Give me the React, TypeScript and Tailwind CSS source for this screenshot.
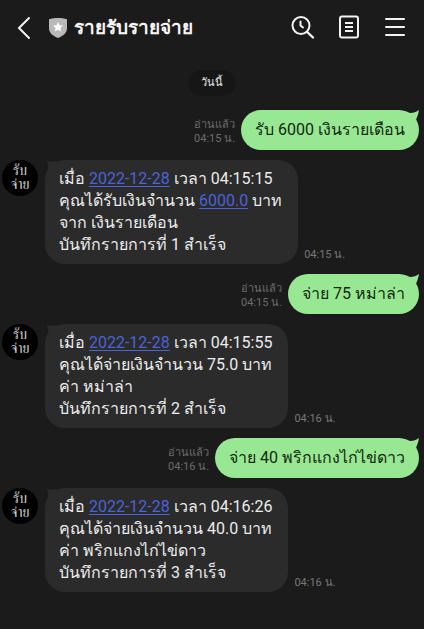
import React from "react";

type Incoming = {
  kind: "in";
  date: string;
  clock: string;
  lead: string;
  amount: string;
  linked?: boolean;
  item: string;
  entry: number;
  time: string;
};
type Outgoing = { kind: "out"; text: string; time: string };
type Message = Incoming | Outgoing;

const messages: Message[] = [
  { kind: "out", text: "รับ 6000 เงินรายเดือน", time: "04:15 น." },
  { kind: "in", date: "2022-12-28", clock: "04:15:15", lead: "คุณได้รับเงินจำนวน", amount: "6000.0", linked: true, item: "จาก เงินรายเดือน", entry: 1, time: "04:15 น." },
  { kind: "out", text: "จ่าย 75 หม่าล่า", time: "04:15 น." },
  { kind: "in", date: "2022-12-28", clock: "04:15:55", lead: "คุณได้จ่ายเงินจำนวน", amount: "75.0", item: "ค่า หม่าล่า", entry: 2, time: "04:16 น." },
  { kind: "out", text: "จ่าย 40 พริกแกงไก่ไข่ดาว", time: "04:16 น." },
  { kind: "in", date: "2022-12-28", clock: "04:16:26", lead: "คุณได้จ่ายเงินจำนวน", amount: "40.0", item: "ค่า พริกแกงไก่ไข่ดาว", entry: 3, time: "04:16 น." },
];

function Header() {
  return (
    <header className="flex h-14 items-center pr-4 pl-3">
      <button type="button" aria-label="Back" className="flex h-8 w-6 items-center justify-center">
        <svg width="14" height="24" viewBox="0 0 14 24" fill="none" stroke="#f4f4f4" strokeWidth="2" strokeLinecap="round">
          <path d="M12 2 L2 12 L12 22" />
        </svg>
      </button>
      <svg className="ml-3 shrink-0" width="20" height="22" viewBox="0 0 20 22" aria-hidden="true">
        <path d="M10 1 C13 1 16.500 1.300 19 2.200 V11 C19 16 15 19 10 21 C5 19 1 16 1 11 V2.200 C3.500 1.300 7 1 10 1Z" fill="#b9b9b9" />
        <path d="M10 5 L11.500 8.200 L15 8.600 L12.400 11 L13.100 14.500 L10 12.700 L6.900 14.500 L7.600 11 L5 8.600 L8.500 8.200Z" fill="#fff" />
      </svg>
      <h1 className="ml-1.5 flex-1 text-[19px] font-bold whitespace-nowrap text-[#f6f6f6]">รายรับรายจ่าย</h1>
      <nav className="flex items-center gap-5 text-[#f4f4f4]">
        <button type="button" aria-label="Search">
          <svg width="26" height="26" viewBox="0 0 26 26" fill="none" stroke="currentColor" strokeWidth="2" strokeLinecap="round">
            <circle cx="11" cy="10.500" r="8.500" />
            <path d="M17.200 17 L23 22.500" strokeWidth="2.400" />
            <path d="M10.500 6.500 V10.500 L13 12.500" strokeLinejoin="round" />
          </svg>
        </button>
        <button type="button" aria-label="Notes">
          <svg width="26" height="26" viewBox="0 0 26 26" fill="none" stroke="currentColor" strokeWidth="2">
            <rect x="4" y="1.500" width="18" height="21" rx="2" />
            <path d="M9 8 H17 M9 12 H17 M9 16 H17" />
          </svg>
        </button>
        <button type="button" aria-label="Menu">
          <svg width="26" height="26" viewBox="0 0 26 26" fill="none" stroke="currentColor" strokeWidth="2" strokeLinecap="round">
            <path d="M4 4 H22 M4 12 H22 M4 20 H22" />
          </svg>
        </button>
      </nav>
    </header>
  );
}

function Avatar() {
  return (
    <div className="flex size-9 shrink-0 flex-col items-center justify-center rounded-full bg-black font-[FreeSerif] text-sm leading-[14px] text-[#d0d0d0]">
      <span>รับ</span>
      <span>จ่าย</span>
    </div>
  );
}

const link = "text-[#4a63d8] underline underline-offset-2";

function IncomingRow({ m }: { m: Incoming }) {
  return (
    <li className="flex items-start pl-0.5">
      <Avatar />
      <div className="relative ml-[7px] rounded-[20px] bg-[#2b2b2b] py-2 pr-4 pl-3.5 text-base leading-[22px] whitespace-nowrap text-[#ececec]">
        <svg className="absolute top-0 left-0" width="14" height="12" viewBox="0 0 14 12" aria-hidden="true">
          <path d="M1 0 C3 2 6 2 12 1 L3 10 C4 6 3 3 1 0Z" fill="#2b2b2b" />
        </svg>
        <p>
          เมื่อ <a href="#date" className={link}>{m.date}</a> เวลา {m.clock}
        </p>
        <p>
          {m.lead} {m.linked ? <a href="#amount" className={link}>{m.amount}</a> : m.amount} บาท
        </p>
        <p>{m.item}</p>
        <p>บันทึกรายการที่ {m.entry} สำเร็จ</p>
      </div>
      <time className="ml-1.5 self-end pb-0.5 text-[11px] leading-[14px] whitespace-nowrap text-[#777]">{m.time}</time>
    </li>
  );
}

function OutgoingRow({ m }: { m: Outgoing }) {
  return (
    <li className="flex items-end justify-end pr-[5px]">
      <div className="mr-1.5 pb-1 text-right text-[11px] leading-[14px] whitespace-nowrap text-[#6c6c6c]">
        <p>อ่านแล้ว</p>
        <time className="block">{m.time}</time>
      </div>
      <div className="relative flex h-10 items-center rounded-full bg-[#98e893] px-3.5 text-base whitespace-nowrap text-[#14280f]">
        <svg className="absolute top-0 right-0" width="18" height="14" viewBox="0 0 18 14" aria-hidden="true">
          <path d="M4 2 C9 4 14 3 18 0 C17.500 4 16 7 15 10 L10 12Z" fill="#98e893" />
        </svg>
        <p className="relative">{m.text}</p>
      </div>
    </li>
  );
}

export default function App() {
  return (
    <div lang="th" className="min-h-screen bg-[#1b1b1b] font-[Roboto,'DejaVu_Sans']">
      <Header />
      <main className="pb-9">
        <div className="flex justify-center pt-3.5 pb-3.5">
          <span className="rounded-full bg-[#161616] px-3 text-[11px] leading-[26px] text-[#e6e6e6]">วันนี้</span>
        </div>
        <ul className="flex flex-col gap-2.5">
          {messages.map((m, i) => (m.kind === "in" ? <IncomingRow key={i} m={m} /> : <OutgoingRow key={i} m={m} />))}
        </ul>
      </main>
    </div>
  );
}
